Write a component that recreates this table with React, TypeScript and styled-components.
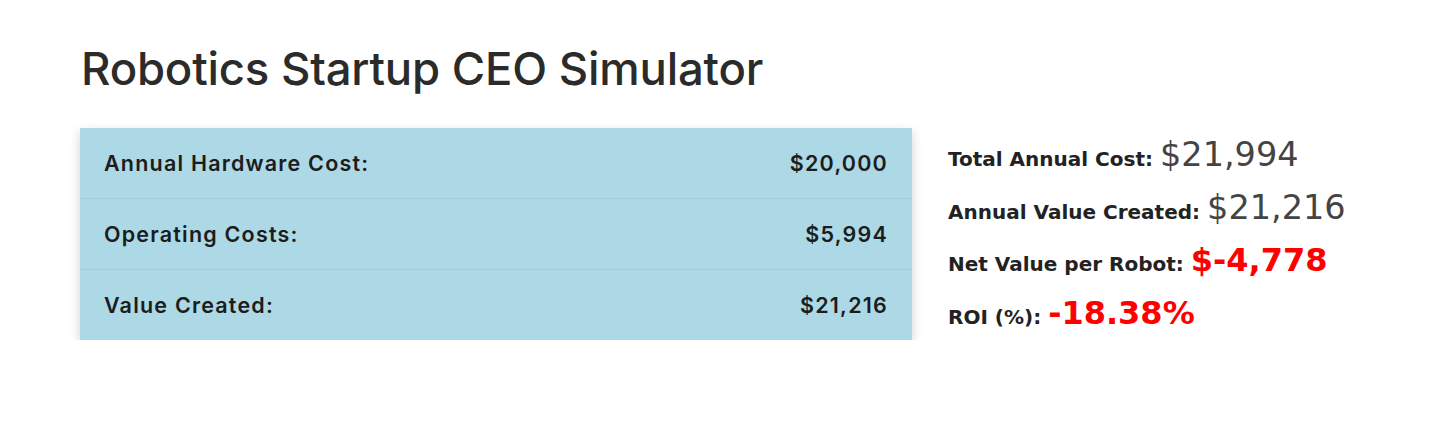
import styled, { createGlobalStyle } from 'styled-components';

interface CostRow {
  label: string;
  value: string;
}

interface Stat {
  label: string;
  value: string;
  negative?: boolean;
}

const GlobalStyle = createGlobalStyle`
  html, body {
    margin: 0;
    padding: 0;
    background: #ffffff;
  }
  body {
    font-family: Inter, 'Liberation Sans', sans-serif;
  }
`;

const Page = styled.div`
  padding: 42px 80px 0 80px;
`;

const Title = styled.h1`
  margin: 0 0 0 1px;
  font-family: Inter, 'Liberation Sans', sans-serif;
  font-size: 45.5px;
  line-height: 54px;
  font-weight: 500;
  letter-spacing: -0.2px;
  color: #2b2b2b;
`;

const Body = styled.div`
  display: flex;
  align-items: center;
  gap: 36px;
  margin-top: 32px;
`;

const CostTable = styled.div`
  width: 832px;
  background: #add8e6;
  box-shadow: 0 4px 10px rgba(0, 0, 0, 0.18);
`;

const Row = styled.div`
  display: flex;
  justify-content: space-between;
  align-items: center;
  height: 70px;
  padding: 0 24px;
  border-top: 1px solid #9fcbdb;
  font-family: Inter, 'Liberation Sans', sans-serif;
  font-size: 21.5px;
  font-weight: 600;
  letter-spacing: 1.2px;
  color: #1c1c1c;

  &:first-child {
    border-top: none;
  }
`;

const Stats = styled.div`
  display: flex;
  flex-direction: column;
  gap: 15px;
  margin-top: -2px;
`;

const StatLine = styled.div`
  display: flex;
  align-items: baseline;
  gap: 7px;
  height: 38px;
  font-family: 'DejaVu Sans', Verdana, sans-serif;
`;

const StatLabel = styled.span`
  font-size: 20px;
  font-weight: 700;
  color: #222222;
`;

const StatValue = styled.span<{ $negative?: boolean }>`
  font-size: ${(p) => (p.$negative ? '32px' : '33.5px')};
  font-weight: ${(p) => (p.$negative ? 700 : 400)};
  color: ${(p) => (p.$negative ? '#ff0000' : '#444444')};
`;

const rows: CostRow[] = [
  { label: 'Annual Hardware Cost:', value: '$20,000' },
  { label: 'Operating Costs:', value: '$5,994' },
  { label: 'Value Created:', value: '$21,216' },
];

const stats: Stat[] = [
  { label: 'Total Annual Cost:', value: '$21,994' },
  { label: 'Annual Value Created:', value: '$21,216' },
  { label: 'Net Value per Robot:', value: '$-4,778', negative: true },
  { label: 'ROI (%):', value: '-18.38%', negative: true },
];

const App = () => {
  return (
    <Page>
      <GlobalStyle />
      <Title>Robotics Startup CEO Simulator</Title>
      <Body>
        <CostTable>
          {rows.map((row) => (
            <Row key={row.label}>
              <span>{row.label}</span>
              <span>{row.value}</span>
            </Row>
          ))}
        </CostTable>
        <Stats>
          {stats.map((s) => (
            <StatLine key={s.label}>
              <StatLabel>{s.label}</StatLabel>
              <StatValue $negative={s.negative}>{s.value}</StatValue>
            </StatLine>
          ))}
        </Stats>
      </Body>
    </Page>
  );
};

export default App;
